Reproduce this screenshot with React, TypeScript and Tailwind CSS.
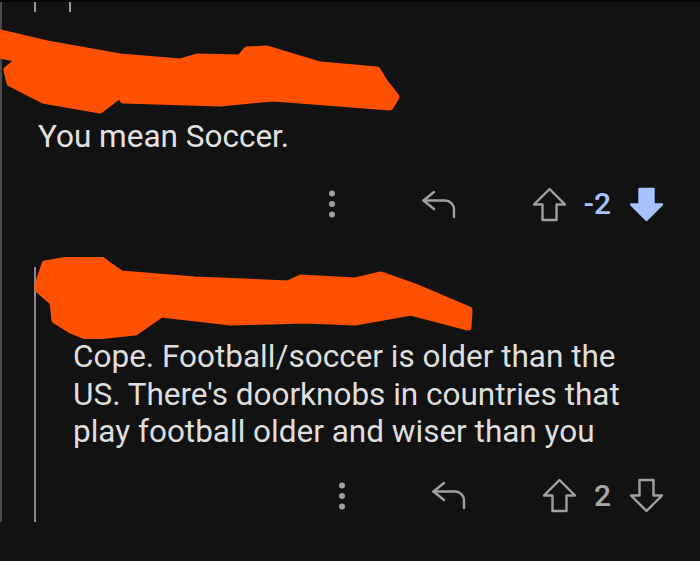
import React from "react";

const ORANGE = "#ff5100";
const GRAY = "#a0a0a0";
const BLUE = "#a6c3ff";

function Dots() {
  return (
    <svg width="8" height="30" viewBox="0 0 8 30" className="block">
      <circle cx="4" cy="4.5" r="3" fill={GRAY} />
      <circle cx="4" cy="15" r="3" fill={GRAY} />
      <circle cx="4" cy="25.5" r="3" fill={GRAY} />
    </svg>
  );
}

function Reply() {
  return (
    <svg width="36" height="29" viewBox="0 0 36 29" className="block" fill="none" stroke={GRAY} strokeWidth="2.4" strokeLinecap="round" strokeLinejoin="round">
      <path d="M13 2 L2.5 10.5 L13 19" />
      <path d="M2.5 10.5 H24 A9 9 0 0 1 33 19.5 V27" />
    </svg>
  );
}

function UpArrow({ filled, color, down }: { filled?: boolean; color: string; down?: boolean }) {
  return (
    <svg width="35" height="35" viewBox="0 0 35 35" className={down ? "block rotate-180" : "block"}>
      <path
        d="M17.5 2 L33 17.5 L24.5 17.5 L24.5 33 L10.5 33 L10.5 17.5 L2 17.5 Z"
        fill={filled ? color : "none"}
        stroke={color}
        strokeWidth="2.4"
        strokeLinejoin="round"
      />
    </svg>
  );
}

function Actions({ score, voted }: { score: string; voted?: boolean }) {
  return (
    <div className="flex items-center justify-end pr-[36px] h-[36px]">
      <Dots />
      <div className="w-[85px]" />
      <Reply />
      <div className="w-[75px]" />
      <UpArrow color={GRAY} />
      <div className="w-[17px]" />
      <span className={voted ? "text-[30px] leading-none text-[#a6c3ff] font-medium" : "text-[30px] leading-none text-[#a8a8a8] font-medium"}>
        {score}
      </span>
      <div className="w-[18px]" />
      <UpArrow color={voted ? BLUE : GRAY} filled={voted} down />
    </div>
  );
}

export default function App() {
  return (
    <div className="w-[700px] h-[561px] bg-[#121212] overflow-hidden flex flex-col font-[Roboto,sans-serif]">
      <div className="h-[2px] bg-[#050505] shrink-0" />
      <div className="flex flex-col border-l-2 border-[#4a4a4a] h-[520px] shrink-0">
        <div className="flex items-start pl-[32px] gap-[33px] h-[26px] shrink-0">
          <div className="w-[2px] h-[10px] bg-[#9a9a9a]" />
          <div className="w-[2px] h-[10px] bg-[#9a9a9a]" />
        </div>
        <svg width="400" height="86" viewBox="0 28 400 86" className="block -ml-[2px] shrink-0">
          <path
            d="M0 33 L47 44 L120 57 L180 62 L197 57 L240 58 L247 50 L267 49 L320 65 L377 70 L385 83 L396 97 L390 107 L300 100 L273 98 L220 103 L123 100 L120 90 L117 97 L100 110 L83 107 L43 100 L10 83 L7 70 L13 65 L33 62 L0 55 Z"
            fill={ORANGE}
            stroke={ORANGE}
            strokeWidth="7"
            strokeLinejoin="round"
          />
        </svg>
        <div className="pl-[36px] mt-[5px] text-[31.5px] leading-[36px] text-[#e2e2e2] whitespace-nowrap shrink-0">
          You mean Soccer.
        </div>
        <div className="mt-[31px] shrink-0">
          <Actions score="-2" voted />
        </div>
        <div className="flex mt-[35px] ml-[32px] flex-1">
          <div className="w-[2px] mt-[10px] bg-[#8c8c8c] shrink-0" />
          <div className="flex flex-col flex-1">
            <svg width="440" height="82" viewBox="46 255 440 82" className="block -ml-[2px] shrink-0">
              <path
                d="M50 283 L57 262 L80 258 L100 257 L110 255 L120 263 L133 272 L207 278 L300 282 L313 276 L367 279 L393 273 L427 285 L481 308 L480 325 L423 310 L367 320 L317 318 L243 320 L173 312 L147 330 L100 335 L83 328 L67 318 L65 300 L50 287 Z"
                fill={ORANGE}
                stroke={ORANGE}
                strokeWidth="7"
                strokeLinejoin="round"
              />
            </svg>
            <div className="pl-[37px] -mt-[1px] text-[31.5px] leading-[37.5px] text-[#dedede] whitespace-nowrap">
              Cope. Football/soccer is older than the
              <br />
              US. There's doorknobs in countries that
              <br />
              play football older and wiser than you
            </div>
            <div className="mt-[27px] -ml-[34px]">
              <Actions score="2" />
            </div>
          </div>
        </div>
      </div>
    </div>
  );
}
